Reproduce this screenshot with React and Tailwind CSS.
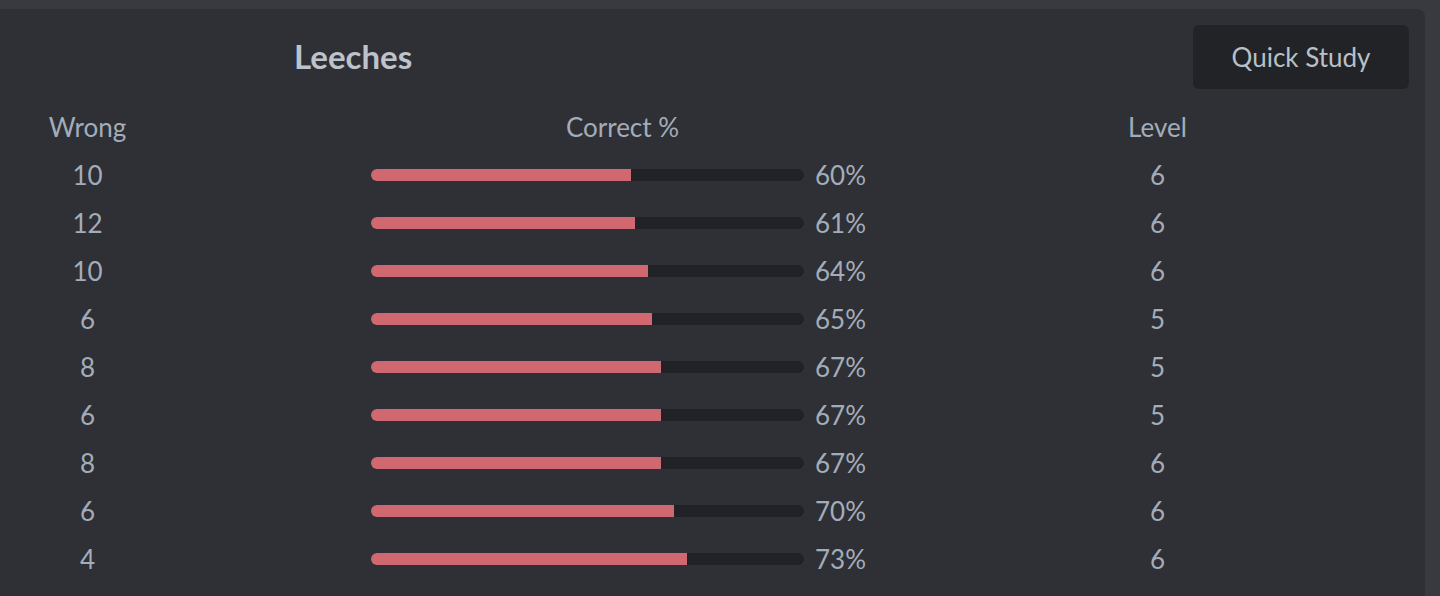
const rows = [
  { wrong: 10, pct: 60, level: 6 },
  { wrong: 12, pct: 61, level: 6 },
  { wrong: 10, pct: 64, level: 6 },
  { wrong: 6, pct: 65, level: 5 },
  { wrong: 8, pct: 67, level: 5 },
  { wrong: 6, pct: 67, level: 5 },
  { wrong: 8, pct: 67, level: 6 },
  { wrong: 6, pct: 70, level: 6 },
  { wrong: 4, pct: 73, level: 6 },
];

const App = () => {
  return (
    <div className="h-[596px] overflow-hidden bg-[#393a40] pt-[9px] pr-[15px] font-['Lato',sans-serif]">
      <div className="h-full rounded-tr-lg bg-[#2f3036] text-[#a3adb9]">
        <div className="flex items-center justify-between pt-4 pr-4">
          <h2 className="pl-[294px] text-[33px] font-bold text-[#bcc3cc]">Leeches</h2>
          <button className="flex h-16 w-[216px] items-center justify-center rounded-md bg-[#222327] text-[26px] text-[#b8c0c8]">
            Quick Study
          </button>
        </div>

        <div className="mt-[14px] grid grid-cols-[175px_895px_175px] text-[26px]">
          <div className="flex h-12 items-center justify-center">Wrong</div>
          <div className="flex h-12 items-center justify-center">Correct %</div>
          <div className="flex h-12 items-center justify-center">Level</div>

          {rows.map((row, i) => (
            <div key={i} className="contents">
              <div className="flex h-12 items-center justify-center">{row.wrong}</div>
              <div className="flex h-12 items-center justify-center gap-[11px]">
                <div className="h-3 w-[433px] overflow-hidden rounded-full bg-[#212226]">
                  <div className="h-full bg-[#d16771]" style={{ width: `${row.pct}%` }} />
                </div>
                <span className="w-[59px]">{row.pct}%</span>
              </div>
              <div className="flex h-12 items-center justify-center">{row.level}</div>
            </div>
          ))}
        </div>
      </div>
    </div>
  );
};

export default App;
